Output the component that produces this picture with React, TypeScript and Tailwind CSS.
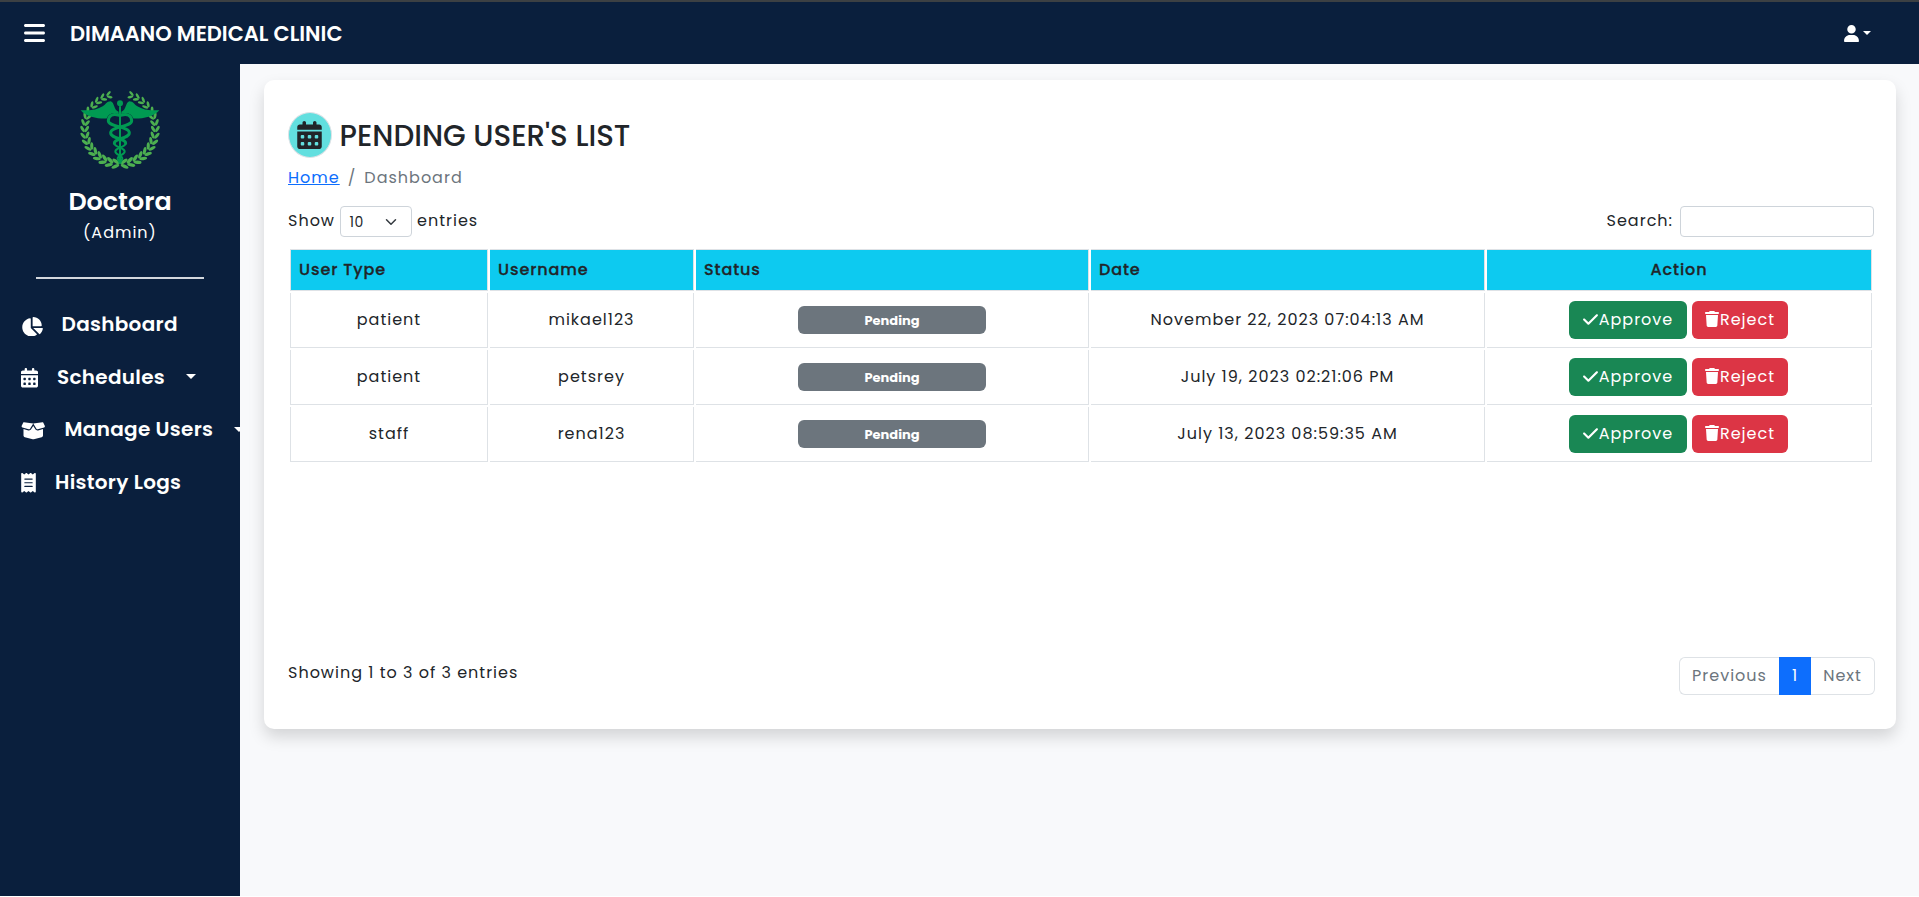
import type { ReactNode } from "react";
import {
  FaBars,
  FaBoxOpen,
  FaCalendarDays,
  FaChartPie,
  FaCheck,
  FaReceipt,
  FaTrash,
  FaUser,
} from "react-icons/fa6";

type PendingUser = { type: string; username: string; date: string };

const USERS: PendingUser[] = [
  { type: "patient", username: "mikael123", date: "November 22, 2023 07:04:13 AM" },
  { type: "patient", username: "petsrey", date: "July 19, 2023 02:21:06 PM" },
  { type: "staff", username: "rena123", date: "July 13, 2023 08:59:35 AM" },
];

function Caret({ className = "" }: { className?: string }) {
  return (
    <svg viewBox="0 0 10 5" className={className} fill="currentColor" aria-hidden="true">
      <path d="M0 0h10L5 5z" />
    </svg>
  );
}

// Leaf pairs that follow one half of the wreath, from the base up to the tip.
function LaurelBranch() {
  const leaves: ReactNode[] = [];
  const count = 16;
  for (let i = 0; i < count; i++) {
    const t = i / (count - 1);
    const a = ((97 + t * 155) * Math.PI) / 180;
    const size = 12.5 - t * 3.5;
    const tangent = (a * 180) / Math.PI + 90;
    [-1, 1].forEach((side) => {
      const r = 106 + side * size * 0.6;
      const x = 180 + Math.cos(a) * r;
      const y = 148 + Math.sin(a) * r;
      leaves.push(
        <ellipse
          key={`${i}${side}`}
          cx={x}
          cy={y}
          rx={size}
          ry={size * 0.42}
          transform={`rotate(${tangent - side * 30} ${x} ${y})`}
        />,
      );
    });
  }
  return <>{leaves}</>;
}

function ClinicLogo() {
  const wing =
    "M62 92C90 94 112 90 128 80C138 74 140 65 152 65C164 68 160 90 176 97L176 104C162 98 146 100 140 117C112 118 80 112 62 92Z";
  const upper = "M175 107C160 101 145 108 145 124C145 143 208 140 208 160C208 178 163 176 163 191";
  const lower = "M163 191C163 204 194 204 194 216C194 226 173 228 173 237C173 243 178 246 182 250";
  return (
    <svg viewBox="60 32 240 236" className="h-[79px] w-20" aria-hidden="true">
      <g fill="#4caf50">
        <LaurelBranch />
        <g transform="translate(360 0) scale(-1 1)">
          <LaurelBranch />
        </g>
      </g>
      <g fill="#009a52">
        <circle cx="180" cy="71" r="9" />
        <rect x="177" y="80" width="6" height="168" />
        <path d={wing} />
        <path d={wing} transform="translate(360 0) scale(-1 1)" />
      </g>
      <g fill="none" stroke="#009a52" strokeLinecap="round">
        <path d={upper} strokeWidth="9" />
        <path d={upper} strokeWidth="9" transform="translate(360 0) scale(-1 1)" />
        <path d={lower} strokeWidth="6" />
        <path d={lower} strokeWidth="6" transform="translate(360 0) scale(-1 1)" />
      </g>
    </svg>
  );
}

function NavItem({ icon, label, caret }: { icon: ReactNode; label: string; caret?: boolean }) {
  return (
    <a className="flex h-[52.6px] items-center whitespace-nowrap text-[20px] font-semibold tracking-[0.3px]">
      {icon}
      <span>{label}</span>
      {caret && <Caret className="ml-[21px] h-[5px] w-[10px] shrink-0" />}
    </a>
  );
}

function Sidebar() {
  return (
    <aside className="flex w-60 shrink-0 flex-col bg-[#0a1f3d] text-white">
      <div className="flex flex-col items-center pt-[26px]">
        <ClinicLogo />
        <div className="mb-px mt-[13px] text-[25.4px] font-semibold leading-[38px] tracking-normal">Doctora</div>
        <div className="text-base leading-6 tracking-[1px]">(Admin)</div>
      </div>
      <div className="mx-9 mt-8 h-[2px] shrink-0 bg-[#d3d7dd]" />
      <nav className="mt-[19px] flex flex-col pl-[21px]">
        <NavItem icon={<FaChartPie className="mr-[18.5px] h-[19.5px] w-[22px] shrink-0 translate-y-[2px]" />} label="Dashboard" />
        <NavItem icon={<FaCalendarDays className="mr-[19px] h-[19.5px] w-[17px] shrink-0 translate-y-px" />} label="Schedules" caret />
        <NavItem icon={<FaBoxOpen className="mr-[19px] h-[19.5px] w-[24.5px] shrink-0 translate-y-px" />} label="Manage Users" caret />
        <NavItem icon={<FaReceipt className="mr-[19px] h-[19.5px] w-[15px] shrink-0 translate-y-px" />} label="History Logs" />
      </nav>
    </aside>
  );
}

function UsersTable() {
  const th =
    "h-[42px] border-y border-r border-[#dee2e6] bg-[#0dcaf0] px-2 py-0 font-medium tracking-[0.9px] [-webkit-text-stroke:0.3px_#212529]";
  const td = "h-[55px] border-b border-r border-[#dee2e6] p-0 text-center";
  return (
    <table className="mt-[10px] w-[1586px] table-fixed border-separate border-spacing-[2px]">
      <colgroup>
        <col className="w-[198px]" />
        <col className="w-[204px]" />
        <col className="w-[393px]" />
        <col className="w-[394px]" />
        <col className="w-[385px]" />
      </colgroup>
      <thead>
        <tr>
          <th className={`${th} border-l text-left`}>User Type</th>
          <th className={`${th} text-left`}>Username</th>
          <th className={`${th} text-left`}>Status</th>
          <th className={`${th} text-left`}>Date</th>
          <th className={`${th} text-center`}>Action</th>
        </tr>
      </thead>
      <tbody>
        {USERS.map((user) => (
          <tr key={user.username}>
            <td className={`${td} border-l`}>{user.type}</td>
            <td className={td}>{user.username}</td>
            <td className={td}>
              <span className="mx-auto block h-7 w-[188px] rounded-md bg-[#6c757d] pt-px text-[13px] font-bold leading-7 tracking-normal text-white">
                Pending
              </span>
            </td>
            <td className={td}>{user.date}</td>
            <td className={td}>
              <div className="flex justify-center gap-[5px] pr-[2px]">
                <button className="flex h-[38px] w-[118px] items-center justify-center rounded-md bg-[#198754] pl-px tracking-[1px] text-white">
                  <FaCheck className="mr-px h-[17px] w-[15px] -translate-y-px" />
                  Approve
                </button>
                <button className="flex h-[38px] w-24 items-center justify-center rounded-md bg-[#dc3545] pl-px tracking-[1px] text-white">
                  <FaTrash className="mr-px h-4 w-[14px] -translate-y-px" />
                  Reject
                </button>
              </div>
            </td>
          </tr>
        ))}
      </tbody>
    </table>
  );
}

export default function App() {
  return (
    <div className="flex h-[896px] flex-col overflow-hidden font-['Poppins','Inter',sans-serif] text-base tracking-[1px] text-[#212529]">
      <header className="flex h-16 shrink-0 items-center border-t-2 border-[#3c4043] bg-[#0a1f3d] pl-6 text-white">
        <FaBars className="h-6 w-[21px]" />
        <span className="ml-[25px] pt-px text-[21px] font-semibold tracking-normal">DIMAANO MEDICAL CLINIC</span>
        <div className="ml-auto mr-12 flex items-center">
          <FaUser className="h-[17px] w-[15px]" />
          <Caret className="ml-1 h-1 w-2" />
        </div>
      </header>

      <div className="flex flex-1">
        <Sidebar />
        <main className="flex-1 bg-[#f8f9fb]">
          <section className="ml-6 mt-4 flex h-[649px] w-[1632px] flex-col rounded-[10px] bg-white px-6 pt-8 shadow-[0_8px_16px_rgba(0,0,0,0.15)]">
            <div className="flex h-[46px] items-center">
              <span className="flex h-[46px] w-11 items-center justify-center rounded-[50%] border border-[#dee2e6] bg-[#62dfdf] pr-[2px]">
                <FaCalendarDays className="h-[28px] w-[25px]" />
              </span>
              <h3 className="ml-[7.5px] pt-[2px] text-[29.3px] font-medium leading-[46px] tracking-normal">PENDING USER'S LIST</h3>
            </div>

            <nav className="mt-2 flex leading-6">
              <a className="text-[#0d6efd] underline">Home</a>
              <span className="px-2 text-[#6c757d]">/</span>
              <span className="text-[#6c757d]">Dashboard</span>
            </nav>

            <div className="mt-4 flex h-[31px] w-[1586px] items-center justify-between">
              <label className="flex items-center">
                <span className="pb-[2px]">Show</span>
                <span className="mx-[5px] flex h-[31px] w-[72px] items-center justify-between rounded border border-[#ced4da] pl-[8.5px] pr-[14px] text-sm tracking-[0.5px]">
                  10
                  <svg viewBox="0 0 16 16" className="h-3 w-3" fill="none" stroke="#343a40" strokeWidth="2" strokeLinecap="round" strokeLinejoin="round">
                    <path d="m2 5 6 6 6-6" />
                  </svg>
                </span>
                <span className="pb-[2px]">entries</span>
              </label>
              <label className="flex items-center gap-[7px]">
                <span className="pb-[2px]">Search:</span>
                <input className="h-[31px] w-[194px] rounded border border-[#ced4da] bg-white" />
              </label>
            </div>

            <UsersTable />

            <div className="mt-auto mb-[34px] flex h-[38px] w-[1587px] items-start justify-between">
              <span className="pt-1 leading-6">Showing 1 to 3 of 3 entries</span>
              <div className="flex h-[38px] items-stretch leading-9 text-[#6c757d]">
                <span className="w-[100px] rounded-l-md border border-r-0 border-[#dee2e6] text-center">Previous</span>
                <span className="w-8 bg-[#0d6efd] pt-[1px] text-center text-white">1</span>
                <span className="w-16 rounded-r-md border border-l-0 border-[#dee2e6] text-center">Next</span>
              </div>
            </div>
          </section>
        </main>
      </div>
    </div>
  );
}
